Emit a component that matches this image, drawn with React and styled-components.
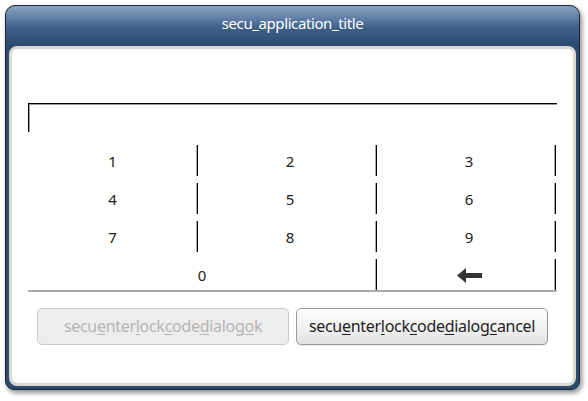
import React from 'react';
import styled, { createGlobalStyle } from 'styled-components';

const GlobalStyle = createGlobalStyle`
  html, body {
    margin: 0;
    padding: 0;
    background: #fff;
  }
  body {
    font-family: "Noto Sans", "DejaVu Sans", sans-serif;
  }
`;

const Page = styled.div`
  padding: 5px;
  width: 588px;
  height: 401px;
  box-sizing: border-box;
`;

const Window = styled.div`
  width: 575px;
  height: 385px;
  box-sizing: border-box;
  border: 1px solid #1b2638;
  border-radius: 10px 10px 9px 9px;
  background: #2b4a6f;
  box-shadow: 2px 3px 5px rgba(0, 0, 0, 0.45);
  display: flex;
  flex-direction: column;
  overflow: hidden;
`;

const TitleBar = styled.div`
  height: 40px;
  flex: none;
  display: flex;
  align-items: center;
  justify-content: center;
  background: linear-gradient(#8aa1c1 0%, #6a86ac 25%, #3e5f87 55%, #2b4a70 100%);
  color: #fff;
  font-size: 15px;
  letter-spacing: -0.4px;
  padding-bottom: 7px;
  box-sizing: border-box;
`;

const Body = styled.div`
  flex: 1;
  padding: 0 3px 3px;
  display: flex;
`;

const Content = styled.div`
  flex: 1;
  background: #fff;
  border: 3px solid #d9d9cf;
  border-radius: 8px;
  padding: 54px 16px 0;
  display: flex;
  flex-direction: column;
`;

const Input = styled.div`
  height: 28px;
  border-top: 1px solid #000;
  border-left: 1px solid #000;
  box-shadow: inset 1px 1px 0 #9a9a9a;
`;

const Keypad = styled.div`
  margin-top: 13px;
  display: grid;
  grid-template-columns: 170px 179px 179px;
  grid-auto-rows: 31px;
  row-gap: 7px;
  border-bottom: 2px solid #aaa;
  border-bottom-right-radius: 2px;
`;

const Key = styled.div`
  grid-column: span ${p => p.span || 1};
  display: flex;
  align-items: center;
  justify-content: center;
  font-size: 15px;
  color: #222;
  border-right: 1px solid #000;
  box-shadow: -1px 0 0 #aaa inset;
  padding-left: ${p => p.shift || 0}px;
  padding-top: 1px;
`;

const Buttons = styled.div`
  margin-top: 16px;
  display: flex;
  justify-content: center;
  gap: 7px;
`;

const Button = styled.button`
  width: 252px;
  height: 37px;
  border-radius: 5px;
  font-family: "Noto Sans", "DejaVu Sans", sans-serif;
  font-size: 16px;
  letter-spacing: -0.3px;
  padding: 0 0 2px;
  border: 1px solid ${p => (p.disabled ? '#c9c9c9' : '#9a9a9a')};
  color: ${p => (p.disabled ? '#b5b5b5' : '#1e1e1e')};
  background: ${p =>
    p.disabled
      ? '#ededed'
      : 'linear-gradient(#fdfdfd 0%, #f2f2f2 50%, #e2e2e2 100%)'};
  box-shadow: ${p => (p.disabled ? 'none' : '0 1px 0 rgba(0,0,0,0.08)')};
  u {
    text-decoration-thickness: 1px;
    text-underline-offset: 2px;
  }
`;

const BackArrow = () => (
  <svg width="25" height="15" viewBox="0 0 25 15">
    <polygon points="0,7.5 9,0 9,5 25,5 25,10 9,10 9,15" fill="#333" />
  </svg>
);

const rows = [
  ['1', '2', '3'],
  ['4', '5', '6'],
  ['7', '8', '9'],
];

export default function App() {
  return (
    <>
      <GlobalStyle />
      <Page>
        <Window>
          <TitleBar>secu_application_title</TitleBar>
          <Body>
            <Content>
              <Input />
              <Keypad>
                {rows.flat().map((k, i) => (
                  <Key key={k} shift={i % 3 === 0 ? 0 : 6}>
                    {k}
                  </Key>
                ))}
                <Key span={2}>0</Key>
                <Key shift={6}>
                  <BackArrow />
                </Key>
              </Keypad>
              <Buttons>
                <Button disabled>
                  secu<u>e</u>nter<u>l</u>ock<u>c</u>ode<u>d</u>ialog<u>o</u>k
                </Button>
                <Button>
                  secu<u>e</u>nter<u>l</u>ock<u>c</u>ode<u>d</u>ialog<u>c</u>ancel
                </Button>
              </Buttons>
            </Content>
          </Body>
        </Window>
      </Page>
    </>
  );
}
